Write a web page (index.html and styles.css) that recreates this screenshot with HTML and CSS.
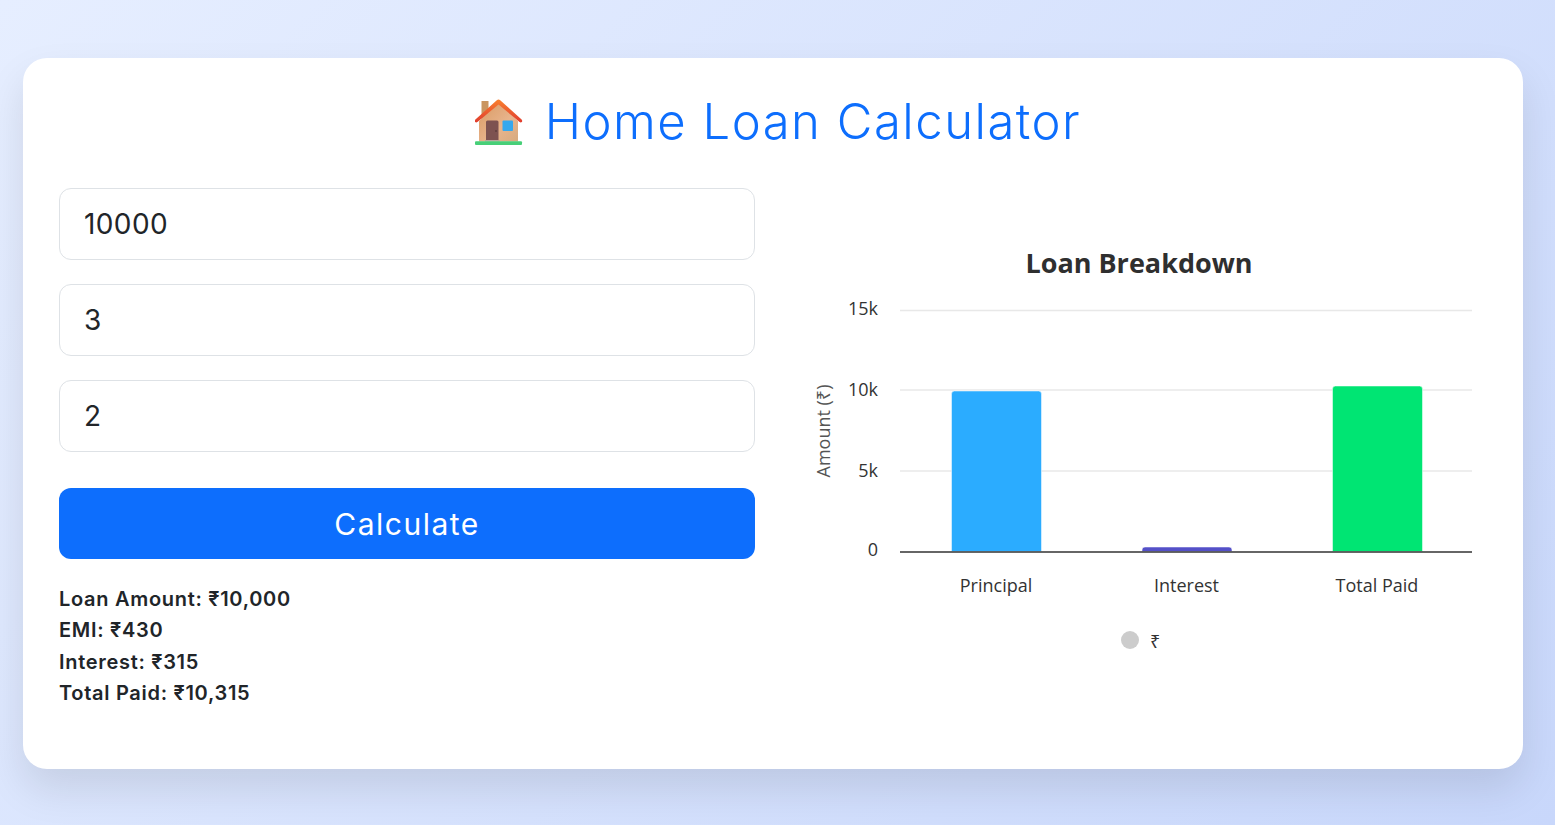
FILE: index.html
```html
<!DOCTYPE html>
<html lang="en">
<head>
    <meta charset="UTF-8">
    <meta name="viewport" content="width=device-width, initial-scale=1.0">
    <title>Home Loan Calculator</title>
    <link rel="stylesheet" href="styles.css">
</head>
<body>
    <main class="card">
        <h1 class="title">
            <svg class="house" viewBox="0 0 48 47" width="48" height="47" aria-hidden="true">
                <defs>
                    <linearGradient id="wall" x1="0" y1="0" x2="1" y2="1">
                        <stop offset="0" stop-color="#d99a63"/>
                        <stop offset="0.6" stop-color="#e8b48c"/>
                        <stop offset="1" stop-color="#d6ab80"/>
                    </linearGradient>
                    <linearGradient id="roof" x1="0.5" y1="0" x2="0.5" y2="1">
                        <stop offset="0" stop-color="#f9812f"/>
                        <stop offset="1" stop-color="#e03c2e"/>
                    </linearGradient>
                </defs>
                <rect x="6.5" y="2" width="7" height="20" fill="#c99560"/>
                <path d="M4 22 23.5 4 43 22V42.5H4Z" fill="url(#wall)"/>
                <path d="M23.5 0.5c.6 0 1.2.3 1.7.7L46.6 20.500c.8.8.8 1.800.2 2.500-.6.600-1.500.600-2.200 0L23.500 5.500 2.400 23c-.7.600-1.600.600-2.200 0-.6-.7-.6-1.700.2-2.500L21.800 1.200c.5-.4 1.100-.7 1.700-.7Z" fill="url(#roof)"/>
                <path d="M11 23a1.500 1.500 0 0 1 1.500-1.500h9.500a1.500 1.500 0 0 1 1.500 1.500V42H11Z" fill="#7d5250"/>
                <circle cx="21" cy="32" r=".8" fill="#4a2f2e"/>
                <rect x="10" y="41" width="14.500" height="1.500" fill="#b8a9a0"/>
                <rect x="27.500" y="21.500" width="10.500" height="10.500" rx="1" fill="#35a8ee"/>
                <rect x="0" y="42.300" width="47" height="3.700" rx="1" fill="#47cf78"/>
            </svg>
            <span>Home Loan Calculator</span>
        </h1>

        <div class="columns">
            <section class="form-col">
                <form class="loan-form">
                    <input class="field" type="number" value="10000">
                    <input class="field" type="number" value="3">
                    <input class="field" type="number" value="2">
                    <button class="calc-btn" type="button">Calculate</button>
                </form>
                <div class="results">
                    <p>Loan Amount: ₹10,000</p>
                    <p>EMI: ₹430</p>
                    <p>Interest: ₹315</p>
                    <p>Total Paid: ₹10,315</p>
                </div>
            </section>

            <section class="chart-col">
                <svg class="chart" viewBox="791 188 696 545" width="696" height="545">
                    <text class="chart-title" x="1139" y="273" text-anchor="middle">Loan Breakdown</text>

                    <line class="grid" x1="900" y1="310.500" x2="1472" y2="310.500"/>
                    <line class="grid" x1="900" y1="390" x2="1472" y2="390"/>
                    <line class="grid" x1="900" y1="471" x2="1472" y2="471"/>

                    <text class="tick" x="878" y="315" text-anchor="end">15k</text>
                    <text class="tick" x="878" y="396" text-anchor="end">10k</text>
                    <text class="tick" x="878" y="477" text-anchor="end">5k</text>
                    <text class="tick" x="878" y="556" text-anchor="end">0</text>

                    <text class="axis-name" transform="translate(830 431) rotate(-90)" text-anchor="middle">Amount (₹)</text>

                    <path class="bar" d="M951.500 551.500V394a3 3 0 0 1 3-3h84a3 3 0 0 1 3 3V551.500Z" fill="#2bacff"/>
                    <path class="bar" d="M1142 551.500V550a3 3 0 0 1 3-3h84a3 3 0 0 1 3 3V551.500Z" fill="#5450c8"/>
                    <path class="bar" d="M1332.500 551.500V389a3 3 0 0 1 3-3h84a3 3 0 0 1 3 3V551.500Z" fill="#00e573"/>

                    <line class="axis" x1="900" y1="552" x2="1472" y2="552"/>

                    <text class="tick" x="996" y="592" text-anchor="middle">Principal</text>
                    <text class="tick" x="1186.500" y="592" text-anchor="middle">Interest</text>
                    <text class="tick" x="1377" y="592" text-anchor="middle">Total Paid</text>

                    <circle cx="1130" cy="640" r="9" fill="#ccc"/>
                    <text class="tick" x="1150" y="648">₹</text>
                </svg>
            </section>
        </div>
    </main>
</body>
</html>
```

FILE: styles.css
```css
* {
    box-sizing: border-box;
}
body {
    font-family: Inter, "Noto Sans", sans-serif;
    background: linear-gradient(135deg, #e6eeff, #c8d7fb);
    margin: 0;
    padding: 58px 32px 56px 23px;
    height: 825px;
    overflow: hidden;
    color: #212529;
}
.card {
    background-color: #fff;
    border-radius: 24px;
    padding: 36px;
    height: 711px;
    box-shadow: 0 20px 40px rgba(0, 0, 0, 0.1);
}
.title {
    display: flex;
    align-items: center;
    justify-content: center;
    gap: 22px;
    margin: 0 0 40px;
    padding-left: 10px;
    height: 54px;
    font-size: 49px;
    font-weight: 300;
    letter-spacing: 1.500px;
    color: #0d6efd;
}
.house {
    margin-top: 2px;
}
.columns {
    display: grid;
    grid-template-columns: 696px 696px;
    gap: 36px;
}
.loan-form {
    display: flex;
    flex-direction: column;
}
.field {
    height: 72px;
    padding: 0 24px;
    margin-bottom: 24px;
    border: 1px solid #dee2e6;
    border-radius: 12px;
    font-family: inherit;
    font-size: 28px;
    letter-spacing: 0.400px;
    color: #212529;
    outline: none;
    appearance: textfield;
}
.calc-btn {
    height: 71px;
    margin-top: 12px;
    border: none;
    border-radius: 12px;
    background-color: #0d6efd;
    color: #fff;
    font-family: inherit;
    font-size: 30px;
    font-weight: 400;
    letter-spacing: 1.500px;
    cursor: pointer;
}
.results {
    margin-top: 24.500px;
    font-size: 20px;
    font-weight: 600;
    letter-spacing: 0.700px;
    line-height: 31.500px;
}
.results p {
    margin: 0;
}
.chart {
    display: block;
    font-family: "Open Sans", "Noto Sans", sans-serif;
}
.chart-title {
    font-size: 27px;
    font-weight: 700;
    fill: #2f2f2f;
}
.tick {
    font-size: 18px;
    fill: #333;
}
.axis-name {
    font-size: 18px;
    fill: #555;
}
.grid {
    stroke: #e8e8e8;
    stroke-width: 1.500;
}
.axis {
    stroke: #333;
    stroke-width: 1.500;
}
.bar {
    stroke: #fff;
    stroke-opacity: 0.5;
    stroke-width: 1;
}
```
